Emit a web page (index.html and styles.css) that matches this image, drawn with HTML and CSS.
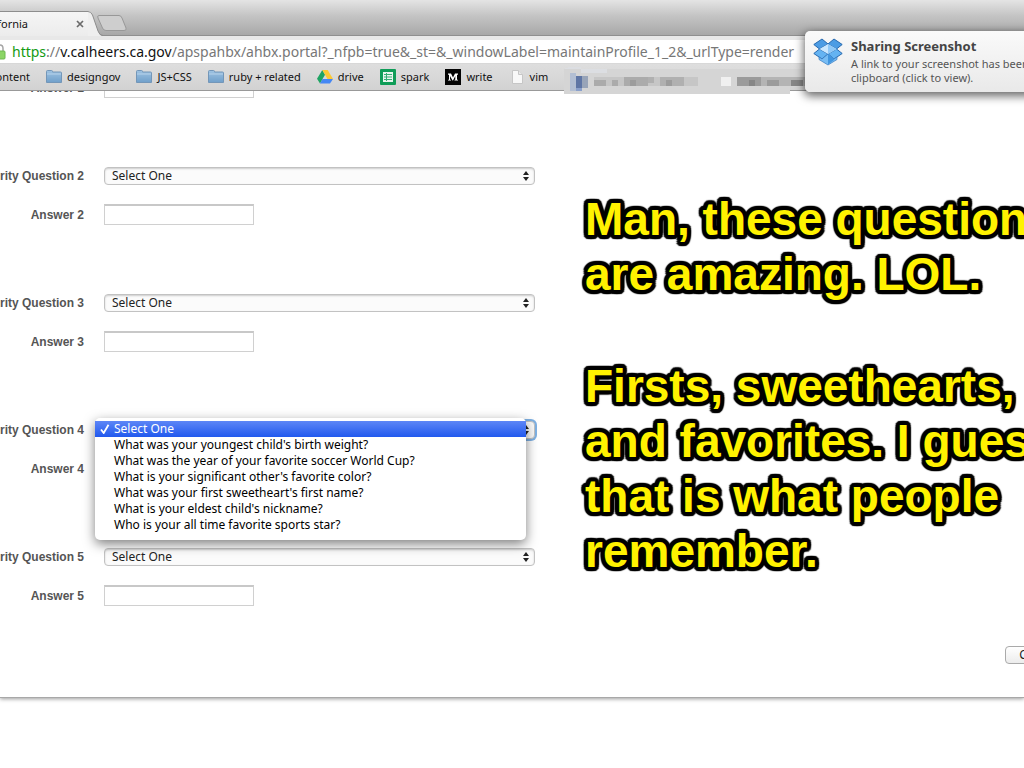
FILE: index.html
```html
<!DOCTYPE html>
<html lang="en">
<head>
<meta charset="utf-8">
<title>California</title>
<link rel="stylesheet" href="styles.css">
</head>
<body>
<header class="browser">
  <div class="tabstrip">
    <div class="tab">
      <span class="tab-title">California</span>
      <button class="tab-close" type="button" aria-label="Close tab"><svg width="8" height="8" viewBox="0 0 8 8"><path d="M1 1l6 6M7 1l-6 6" stroke="#6a6a6a" stroke-width="1.7"/></svg></button>
    </div>
    <svg class="tab-edge" width="42" height="25" viewBox="0 0 42 25">
      <path d="M0 0Q3 0 4.500 4L10 20Q11.500 25 15 25H0Z" fill="#efefef"/>
      <path d="M0 .5Q3 .5 4.500 4L10 20Q11.500 24.500 15 24.500" fill="none" stroke="#8d8d8d"/>
      <path d="M11 4.500H31Q33 4.500 34 7L38 17Q39 19.500 36 19.500H18Q15.500 19.500 14.500 17L10 7Q9 4.500 11 4.500Z" fill="#cecece" stroke="#989898"/>
    </svg>
  </div>
  <div class="address">
    <svg class="lock" width="6" height="16" viewBox="0 0 6 16"><path d="M-3 7V4.500Q-3 1 0 1T3 4.500V7" fill="none" stroke="#a5a5a5" stroke-width="1.500"/><rect x="-5" y="7" width="10" height="8" rx="1" fill="#8bd565" stroke="#6db850"/></svg>
    <div class="url"><span class="scheme">https</span>://<span class="host">v.calheers.ca.gov</span>/apspahbx/ahbx.portal?_nfpb=true&amp;_st=&amp;_windowLabel=maintainProfile_1_2&amp;_urlType=render</div>
  </div>
  <svg class="defs" width="0" height="0">
    <defs>
      <linearGradient id="blue" x1="0" y1="0" x2="0" y2="1"><stop offset="0" stop-color="#9fc3e2"/><stop offset="1" stop-color="#6f9fca"/></linearGradient>
      <symbol id="folder" viewBox="0 0 16 16"><path d="M.5 13.500V2.500Q.5 1.500 1.500 1.500H5.500Q6.500 1.500 6.500 2.500V3H14.500Q15.500 3 15.500 4V13.500Z" fill="url(#blue)" stroke="#7396b8"/><path d="M1 5H15" stroke="#b6d2ea"/></symbol>
    </defs>
  </svg>
  <nav class="bookmarks">
    <a class="bookmark first" href="#">content</a>
    <a class="bookmark" href="#"><svg width="16" height="16"><use href="#folder"/></svg>designgov</a>
    <a class="bookmark" href="#"><svg width="16" height="16"><use href="#folder"/></svg>JS+CSS</a>
    <a class="bookmark" href="#"><svg width="16" height="16"><use href="#folder"/></svg>ruby + related</a>
    <a class="bookmark" href="#"><svg width="16" height="16" viewBox="0 0 16 16"><path d="M5.300 1L8 5.700 3 14.500 0 9.800Z" fill="#1fa463"/><path d="M5.300 1H10.700L16 10H10.500Z" fill="#fcc934"/><path d="M5.500 10H16L13 14.500H3Z" fill="#4587f4"/></svg>drive</a>
    <a class="bookmark" href="#"><svg width="16" height="16" viewBox="0 0 16 16"><rect width="16" height="16" rx="1" fill="#0f9d58"/><path d="M3 3H13V13H3Z" fill="#e8f5ee"/><path d="M4 5.500H12M4 8H12M4 10.500H12M6.500 4V12" stroke="#36ad74"/></svg>spark</a>
    <a class="bookmark" href="#"><svg width="16" height="16" viewBox="0 0 16 16"><rect width="16" height="16" fill="#050505"/><path d="M3 4.500H6L8 8.500 10 4.500H13V5.500L12 6V10.500L13 11V11.500H9.500V11L10.300 10.500V7L8 11.500H7.500L5 7V10.500L6 11V11.500H3V11L4 10.500V6L3 5.500Z" fill="#fff"/></svg>write</a>
    <a class="bookmark" href="#"><svg width="16" height="16" viewBox="0 0 16 16"><path d="M3.500 1.500H9.500L13.500 5.500V14.500H3.500Z" fill="#f8f8f8" stroke="#c6c6c6"/><path d="M9.500 1.500V5.500H13.500" fill="#e8e8e8" stroke="#c6c6c6"/></svg>vim</a>
    <svg class="mosaic" width="244" height="27" viewBox="0 0 244 27" shape-rendering="crispEdges">
      <path d="M0 2H244V20H226V27H0Z" fill="#d5d5d5"/>
      <path d="M5 0H17V6H43V2H0" fill="#dcdee2"/>
      <path d="M6 6H12V24H6Z" fill="#b3bfd3"/><path d="M12 9H18V21H12Z" fill="#5f76a5"/><path d="M18 9H24V21H18Z" fill="#98a4b8"/><path d="M12 21H18V24H12Z" fill="#8aa0cb"/>
      <path d="M30 10H134V19H30Z" fill="#c6c6c6"/>
      <path d="M30 13H42V19H30ZM48 13H54V19H48ZM60 10H84V19H60Z" fill="#ababab"/><path d="M84 10H90V16H84ZM96 10H120V19H96Z" fill="#b0b0b0"/><path d="M66 13H72V19H66ZM102 13H108V19H102Z" fill="#9c9c9c"/>
      <path d="M157 10H167V19H157Z" fill="#f0f0f0"/>
      <path d="M173 10H244V19H173Z" fill="#b4b4b4"/>
      <path d="M173 10H197V19H173ZM203 13H215V19H203Z" fill="#9b9b9b"/><path d="M185 13H191V19H185ZM227 13H239V19H227Z" fill="#868686"/>
    </svg>
  </nav>
</header>

<aside class="notice">
  <svg class="dropbox" width="30" height="28" viewBox="0 0 30 28">
    <path d="M9 1L15 6 6.500 11 .8 6.500ZM21 1L15 6 23.500 11 29.200 6.500Z" fill="#4c9ce4" stroke="#2668ae"/>
    <path d="M6.500 11L15 16 9 21 .8 15.500ZM23.500 11L15 16 21 21 29.200 15.500Z" fill="#64b3f2" stroke="#2668ae"/>
    <path d="M15 6L23.500 11 15 16 6.500 11Z" fill="#c9e7ff"/>
    <path d="M15 6L23.500 11 15 16Z" fill="#8fc8f7"/>
    <path d="M6 19L9 21 15 16 21 21 24 19V21.500L15 27 6 21.500Z" fill="#78bdf4" stroke="#3479c0" stroke-width=".7"/>
    <path d="M15 16V26.500L21 22V21Z" fill="#4296df"/>
  </svg>
  <div class="notice-body">
    <h2 class="notice-title">Sharing Screenshot</h2>
    <p class="notice-text">A link to your screenshot has been<br>clipboard (click to view).</p>
  </div>
</aside>

<main class="page">
  <form class="panel">
    <div class="columns">
      <div class="questions">
        <div class="group scrolled">
          <label class="label" for="a1">Answer 1</label><input class="answer" id="a1" type="text">
        </div>
        <div class="group">
          <label class="label" for="q2">Security Question 2</label>
          <div class="picker"><select class="select" id="q2"><option>Select One</option></select><svg class="arrows" width="6" height="10" viewBox="0 0 6 10"><path d="M0 4L3 0 6 4ZM0 6H6L3 10Z" fill="#222"/></svg></div>
          <label class="label" for="a2">Answer 2</label><input class="answer" id="a2" type="text">
        </div>
        <div class="group">
          <label class="label" for="q3">Security Question 3</label>
          <div class="picker"><select class="select" id="q3"><option>Select One</option></select><svg class="arrows" width="6" height="10" viewBox="0 0 6 10"><path d="M0 4L3 0 6 4ZM0 6H6L3 10Z" fill="#222"/></svg></div>
          <label class="label" for="a3">Answer 3</label><input class="answer" id="a3" type="text">
        </div>
        <div class="group">
          <label class="label" for="q4">Security Question 4</label>
          <div class="picker">
            <select class="select focused" id="q4"><option>Select One</option></select><svg class="arrows" width="6" height="10" viewBox="0 0 6 10"><path d="M0 4L3 0 6 4ZM0 6H6L3 10Z" fill="#222"/></svg>
            <ul class="menu" role="listbox" aria-label="Security Question 4">
              <li class="choice chosen" role="option" aria-selected="true"><svg class="tick" width="10" height="10" viewBox="0 0 10 10"><path d="M1 5.500L3.700 9 8.500 .8" fill="none" stroke="#fff" stroke-width="1.800"/></svg>Select One</li>
              <li class="choice" role="option">What was your youngest child's birth weight?</li>
              <li class="choice" role="option">What was the year of your favorite soccer World Cup?</li>
              <li class="choice" role="option">What is your significant other's favorite color?</li>
              <li class="choice" role="option">What was your first sweetheart's first name?</li>
              <li class="choice" role="option">What is your eldest child's nickname?</li>
              <li class="choice" role="option">Who is your all time favorite sports star?</li>
            </ul>
          </div>
          <label class="label" for="a4">Answer 4</label><input class="answer" id="a4" type="text">
        </div>
        <div class="group last">
          <label class="label" for="q5">Security Question 5</label>
          <div class="picker"><select class="select" id="q5"><option>Select One</option></select><svg class="arrows" width="6" height="10" viewBox="0 0 6 10"><path d="M0 4L3 0 6 4ZM0 6H6L3 10Z" fill="#222"/></svg></div>
          <label class="label" for="a5">Answer 5</label><input class="answer" id="a5" type="text">
        </div>
      </div>
      <div class="remark">
        <p>Man, these questions<br>are amazing. LOL.</p>
        <p>Firsts, sweethearts,<br>and favorites. I guess<br>that is what people<br>remember.</p>
      </div>
    </div>
    <div class="actions"><button class="go" type="button">Continue</button></div>
  </form>
</main>
</body>
</html>
```

FILE: styles.css
```css
* { box-sizing: border-box; }

html { overflow: hidden; }

body {
  margin: 0;
  min-height: 100vh;
  overflow: hidden;
  position: relative;
  background: #fff;
  color: #111;
  font: 11px/16px "Noto Sans", sans-serif;
}

.browser { position: relative; z-index: 2; }

.tabstrip {
  display: flex;
  align-items: flex-end;
  height: 36px;
  background: linear-gradient(#e4e4e4, #c4c4c4 45%, #a8a8a8);
  border-bottom: 1px solid #8f8f8f;
}

.tab {
  display: flex;
  align-items: center;
  justify-content: space-between;
  width: 88px;
  height: 25px;
  padding-right: 3px;
  background: linear-gradient(#f5f5f5, #ececec);
  border-top: 1px solid #8d8d8d;
  margin-bottom: -1px;
}

.tab-title { display: flex; justify-content: flex-end; width: 28px; }

.tab-close { display: flex; padding: 1px; border: 0; background: none; }

.tab-edge { display: block; margin-bottom: -1px; }

.address {
  display: flex;
  align-items: center;
  height: 28px;
  background: #fff;
  border-top: 4px solid #e8e8e8;
  border-bottom: 1px solid #d8d8d8;
}

.lock { flex: none; margin-right: 6px; }

.url { color: #777; font-size: 14px; white-space: nowrap; }
.scheme { color: #129a12; }
.host { color: #111; }

.defs { position: absolute; }

.bookmarks {
  display: flex;
  align-items: center;
  gap: 16px;
  height: 27px;
  background: linear-gradient(#dedede, #d2d2d2);
  border-bottom: 1px solid #999;
}

.bookmark {
  display: flex;
  flex: none;
  align-items: center;
  gap: 5px;
  color: #111;
  text-decoration: none;
}

.first { width: 30px; justify-content: flex-end; }

.mosaic { flex: none; align-self: flex-start; margin-top: 3px; }

.notice {
  position: absolute;
  z-index: 3;
  top: 31px;
  right: -12px;
  display: flex;
  gap: 8px;
  width: 231px;
  height: 61px;
  padding: 7px 8px;
  border-radius: 5px;
  background: linear-gradient(#fafafa, #e9e9e9);
  box-shadow: 0 3px 10px 1px rgba(0, 0, 0, .6);
  color: #555;
}

.dropbox { flex: none; }
.notice-body { white-space: nowrap; }
.notice-title { margin: 0; color: #444; font-size: 13px; line-height: 17px; }
.notice-text { margin: 2px 0 0; font-size: 11px; line-height: 14px; }

.page { overflow-x: clip; }

.panel {
  border-bottom: 1px solid #a8a8a8;
  box-shadow: 0 1px 4px rgba(0, 0, 0, .4);
  background: #fff;
}

.columns {
  display: grid;
  grid-template-columns: 536px 1fr;
  column-gap: 49px;
}

.group {
  display: grid;
  grid-template-columns: 84px 431px;
  grid-auto-rows: 19px;
  gap: 20px;
  align-items: center;
  padding-bottom: 69px;
}

.scrolled { margin-top: -13px; }

.last { padding-bottom: 41px; }

.label {
  display: flex;
  justify-content: flex-end;
  color: #555;
  font: bold 12px/16px "Liberation Sans", sans-serif;
  white-space: nowrap;
}

.picker { position: relative; }

.select {
  display: block;
  width: 100%;
  height: 18px;
  padding: 0 7px;
  appearance: none;
  border: 1px solid #c2c2c2;
  border-radius: 4px;
  background: #fbfbfb;
  box-shadow: inset 0 1px 2px #ccc;
  color: #222;
  font: 12px/16px "Noto Sans", sans-serif;
}

.focused { box-shadow: 0 0 0 2px #7fb1e3; }

.arrows { position: absolute; right: 6px; top: 4px; }

.answer {
  width: 150px;
  height: 21px;
  padding: 0 4px;
  border: 1px solid #d0d0d0;
  border-top: 2px solid #c8c8c8;
  background: #fff;
}

.menu {
  position: absolute;
  z-index: 1;
  top: -3px;
  left: -9px;
  width: 431px;
  margin: 0;
  padding: 3px 0 7px;
  border-radius: 5px;
  background: #fff;
  box-shadow: 0 4px 12px rgba(0, 0, 0, .5);
  color: #000;
  font-size: 12px;
  list-style: none;
}

.choice { position: relative; padding-left: 19px; white-space: nowrap; }

.chosen { background: linear-gradient(#5d86f6, #2159ee); color: #fff; }

.tick { position: absolute; left: 5px; top: 3px; }

.remark {
  padding-top: 101px;
  color: #fff200;
  font: bold 46px/55px "Liberation Sans", sans-serif;
  white-space: nowrap;
  text-shadow:
    4px 0 1px #000, -4px 0 1px #000, 0 4px 1px #000, 0 -4px 1px #000,
    4px 2px 1px #000, 4px -2px 1px #000, -4px 2px 1px #000, -4px -2px 1px #000,
    2px 4px 1px #000, 2px -4px 1px #000, -2px 4px 1px #000, -2px -4px 1px #000,
    3px 3px 1px #000, 3px -3px 1px #000, -3px 3px 1px #000, -3px -3px 1px #000,
    2px 2px 0 #000, 2px -2px 0 #000, -2px 2px 0 #000, -2px -2px 0 #000;
}

.remark p { margin: 0 0 57px; }
.remark p:last-child { margin-bottom: 0; }

.actions { display: flex; justify-content: flex-end; padding-bottom: 33px; }

.go {
  flex: none;
  width: 80px;
  height: 18px;
  margin-right: -61px;
  padding: 0;
  border: 1px solid #aaa;
  border-radius: 4px;
  background: linear-gradient(#fff, #ececec);
  color: #222;
  font: 12px/16px "Noto Sans", sans-serif;
}
```
